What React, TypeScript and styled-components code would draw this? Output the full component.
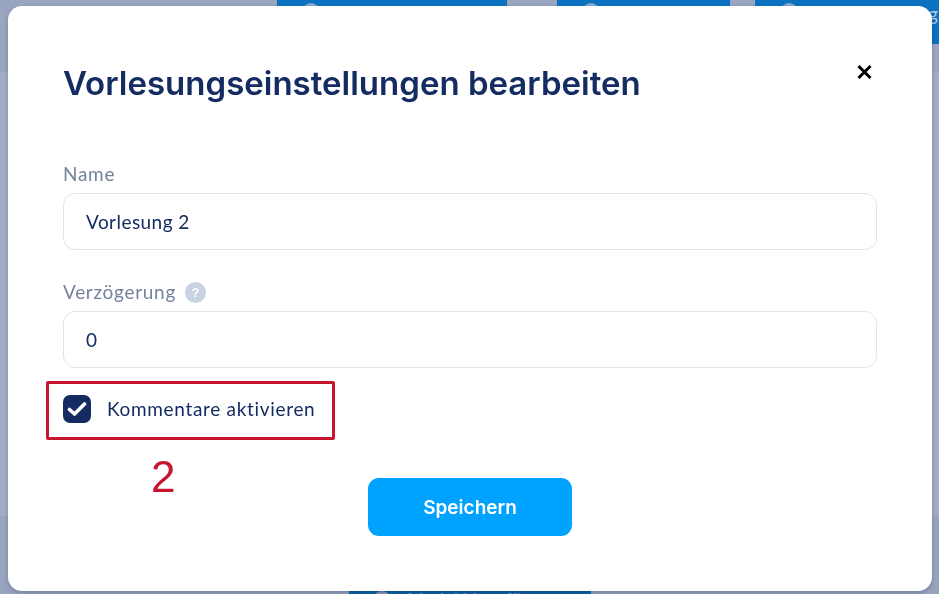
import styled, { createGlobalStyle } from "styled-components";

const GlobalStyle = createGlobalStyle`
  * {
    box-sizing: border-box;
  }
  html, body {
    margin: 0;
    padding: 0;
    height: 100%;
    overflow: hidden;
    background: #a2acc3;
  }
  #root {
    height: 100%;
  }
`;

const Backdrop = styled.div`
  height: 594px;
  display: flex;
  flex-direction: column;
  background: #a2acc3;
`;

const TopBand = styled.div`
  height: 72px;
  background: #9aa5bf;
  display: flex;
  align-items: flex-start;
  padding-left: 277px;
`;

const TopButton = styled.div<{ $width: number; $gap: number; $iconLeft: number }>`
  width: ${(p) => p.$width}px;
  margin-right: ${(p) => p.$gap}px;
  height: 44px;
  background: #0b72c0;
  padding: 3px 0 0 ${(p) => p.$iconLeft}px;
  display: flex;
  justify-content: space-between;
  overflow: hidden;
`;

const TopIcon = styled.span`
  width: 16px;
  height: 16px;
  border-radius: 50%;
  background: #7fa9d3;
`;

const TopText = styled.span`
  font-family: Lato, sans-serif;
  font-size: 19px;
  line-height: 22px;
  padding-right: 1px;
  color: #a9c8e4;
`;

const BottomBand = styled.div`
  margin-top: auto;
  height: 78px;
  background: #98a4be;
  display: flex;
  justify-content: flex-start;
  align-items: flex-end;
  padding-left: 349px;
`;

const BottomButton = styled.div`
  width: 242px;
  height: 6px;
  background: #0a62a8;
  padding: 3px 0 0 23px;
  display: flex;
  gap: 15px;
  overflow: hidden;
`;

const BottomIcon = styled.span`
  width: 20px;
  height: 20px;
  flex: none;
  border-radius: 50%;
  background: #8a97b3;
`;

const BottomText = styled.span`
  font-family: Lato, sans-serif;
  font-size: 18px;
  line-height: 22px;
  margin-top: -3px;
  white-space: nowrap;
  color: #8a97b3;
`;

const Modal = styled.div`
  position: fixed;
  top: 6px;
  left: 8px;
  width: 924px;
  height: 585px;
  background: #fff;
  border-radius: 14px;
  box-shadow: 0 2px 4px rgba(20, 25, 60, 0.25);
  padding: 55px 55px 0;
  display: flex;
  flex-direction: column;
`;

const Header = styled.div`
  display: flex;
  justify-content: space-between;
  align-items: flex-start;
  height: 44px;
  margin-bottom: 58px;
`;

const Title = styled.h1`
  margin: 0;
  font-family: Inter, "Liberation Sans", sans-serif;
  font-weight: 600;
  font-size: 33px;
  line-height: 44px;
  color: #152c63;
`;

const CloseButton = styled.button`
  border: 0;
  background: none;
  padding: 0;
  margin: 3px 5px 0 0;
  width: 15px;
  height: 16px;
  display: flex;
`;

const Field = styled.div`
  display: flex;
  flex-direction: column;
  & + & {
    margin-top: 31px;
  }
`;

const LabelRow = styled.div`
  display: flex;
  align-items: center;
  gap: 9px;
  height: 24px;
  margin-bottom: 6px;
`;

const Label = styled.label`
  font-family: Lato, "Open Sans", sans-serif;
  font-size: 19px;
  letter-spacing: 0.7px;
  padding-bottom: 3px;
  color: #75829b;
`;

const HelpBadge = styled.span`
  width: 21px;
  height: 21px;
  margin-bottom: 2px;
  border-radius: 50%;
  background: #c9d4e3;
  color: #fff;
  font-family: "Liberation Sans", sans-serif;
  font-weight: 700;
  font-size: 13px;
  display: flex;
  align-items: center;
  justify-content: center;
`;

const Input = styled.div`
  height: 57px;
  border: 1px solid #e1e5ea;
  border-radius: 12px;
  padding: 0 22px;
  display: flex;
  align-items: center;
  font-family: Lato, "Open Sans", sans-serif;
  font-size: 19px;
  letter-spacing: 0.45px;
  color: #152c63;
`;

const CheckRow = styled.div`
  display: flex;
  align-items: center;
  gap: 16px;
  height: 28px;
  margin-top: 27px;
`;

const CheckBox = styled.span`
  width: 28px;
  height: 28px;
  border-radius: 7px;
  background: #152c63;
  display: flex;
  align-items: center;
  justify-content: center;
`;

const CheckLabel = styled.span`
  font-family: Lato, "Open Sans", sans-serif;
  font-size: 19px;
  letter-spacing: 0.68px;
  padding-bottom: 2px;
  color: #152c63;
`;

const SaveButton = styled.button`
  align-self: center;
  width: 204px;
  height: 58px;
  margin-top: 55px;
  border: 0;
  border-radius: 11px;
  background: #00a2ff;
  color: #fff;
  font-family: Inter, "Liberation Sans", sans-serif;
  font-weight: 600;
  font-size: 19px;
`;

const Annotation = styled.div`
  position: fixed;
  left: 46px;
  top: 381px;
  width: 289px;
  height: 59px;
  border: 3px solid #c8152f;
  border-radius: 2px;
`;

const AnnotationNumber = styled.div`
  position: fixed;
  left: 151px;
  top: 452px;
  font-family: "Liberation Sans", sans-serif;
  font-size: 44px;
  line-height: 50px;
  color: #c8152f;
`;

export default function App() {
  return (
    <>
      <GlobalStyle />
      <Backdrop>
        <TopBand>
          <TopButton $width={230} $gap={50} $iconLeft={26}>
            <TopIcon />
          </TopButton>
          <TopButton $width={173} $gap={25} $iconLeft={26}>
            <TopIcon />
          </TopButton>
          <TopButton $width={184} $gap={0} $iconLeft={26}>
            <TopIcon />
            <TopText>g</TopText>
          </TopButton>
        </TopBand>
        <BottomBand>
          <BottomButton>
            <BottomIcon />
            <BottomText>Modul hinzufügen</BottomText>
          </BottomButton>
        </BottomBand>
      </Backdrop>
      <Modal>
        <Header>
          <Title>Vorlesungseinstellungen bearbeiten</Title>
          <CloseButton aria-label="Schließen">
            <svg width="15" height="16" viewBox="0 0 15 16">
              <path d="M1.5 2 L13.5 14 M13.5 2 L1.5 14" stroke="#000" strokeWidth="3" fill="none" />
            </svg>
          </CloseButton>
        </Header>
        <Field>
          <LabelRow>
            <Label>Name</Label>
          </LabelRow>
          <Input>Vorlesung 2</Input>
        </Field>
        <Field>
          <LabelRow>
            <Label>Verzögerung</Label>
            <HelpBadge>?</HelpBadge>
          </LabelRow>
          <Input>0</Input>
        </Field>
        <CheckRow>
          <CheckBox>
            <svg width="20" height="16" viewBox="0 0 20 16">
              <path
                d="M2.5 8.5 L7.5 13 L17.5 3"
                stroke="#fff"
                strokeWidth="3.6"
                strokeLinecap="round"
                strokeLinejoin="round"
                fill="none"
              />
            </svg>
          </CheckBox>
          <CheckLabel>Kommentare aktivieren</CheckLabel>
        </CheckRow>
        <SaveButton>Speichern</SaveButton>
      </Modal>
      <Annotation />
      <AnnotationNumber>2</AnnotationNumber>
    </>
  );
}
